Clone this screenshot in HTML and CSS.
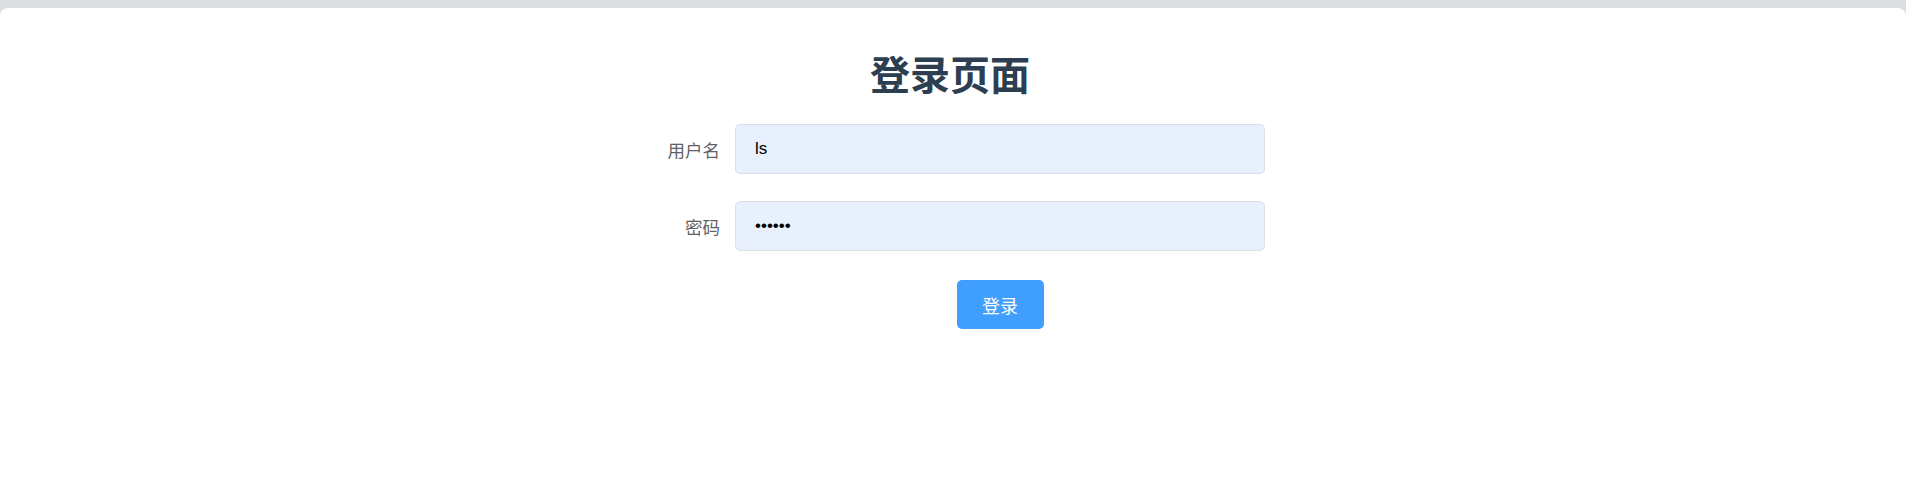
FILE: index.html
```html
<!DOCTYPE html>
<html lang="zh-CN">

<head>
  <meta charset="UTF-8">
  <meta name="viewport" content="width=device-width, initial-scale=1.0">
  <title>登录页面</title>
  <link rel="stylesheet" href="styles.css">
</head>

<body>

  <div class="page">
    <h1 class="title">登录页面</h1>

    <form class="login-form" onsubmit="return false">
      <div class="form-row">
        <label class="form-label" for="username">用户名</label>
        <input class="form-input" type="text" id="username" value="ls">
      </div>

      <div class="form-row">
        <label class="form-label" for="password">密码</label>
        <input class="form-input" type="password" id="password" value="123456">
      </div>

      <div class="form-row actions-row">
        <span class="form-label"></span>
        <div class="form-actions">
          <button class="btn-login" type="submit">登录</button>
        </div>
      </div>
    </form>
  </div>

</body>

</html>
```

FILE: styles.css
```css
* {
  box-sizing: border-box;
  margin: 0;
  padding: 0;
}

body {
  background-color: #dddee2;
  padding-top: 8px;
  height: 100vh;
  font-family: "Liberation Sans", "Noto Sans CJK SC", sans-serif;
}

.page {
  background: white;
  border-radius: 8px 8px 0 0;
  height: 100%;
  padding: 41px 6px 0 0;
}

.title {
  text-align: center;
  font-size: 40px;
  line-height: 48px;
  font-weight: bold;
  color: #2c3e50;
  font-family: "Noto Sans CJK SC", sans-serif;
  margin-bottom: 27px;
}

.login-form {
  width: 630px;
  margin: 0 auto;
}

.form-row {
  display: flex;
  align-items: center;
  margin-bottom: 27px;
}

.actions-row {
  padding-top: 2px;
}

.form-label {
  width: 100px;
  flex-shrink: 0;
  padding-right: 15px;
  text-align: right;
  font-size: 17.5px;
  color: #606266;
  font-family: "Noto Sans CJK SC", sans-serif;
}

.form-input {
  width: 530px;
  height: 50px;
  padding: 0 19px;
  font-size: 17px;
  font-family: "Liberation Sans", sans-serif;
  color: #000;
  background-color: #e8f0fe;
  border: 1px solid #dcdfe6;
  border-radius: 5px;
  outline: none;
}

.form-actions {
  width: 530px;
  display: flex;
  justify-content: center;
}

.btn-login {
  width: 87px;
  height: 49px;
  background: #409eff;
  color: white;
  font-size: 18px;
  font-family: "Noto Sans CJK SC", sans-serif;
  border: none;
  border-radius: 5px;
  cursor: pointer;
}

.btn-login:hover {
  background: #66b1ff;
}
```
